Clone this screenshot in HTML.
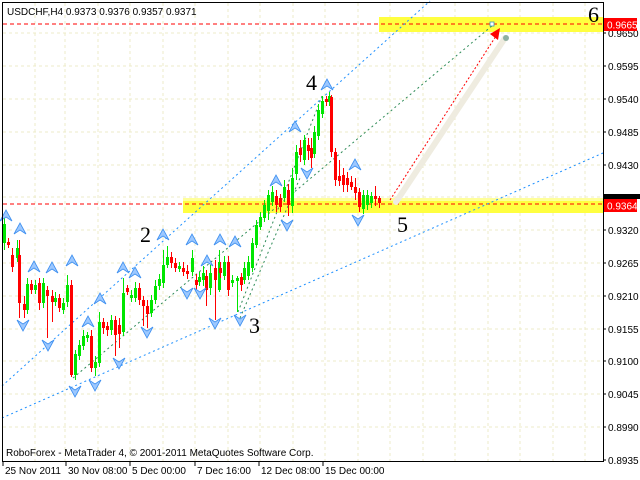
<!DOCTYPE html>
<html><head><meta charset="utf-8"><style>
html,body{margin:0;padding:0;background:#fff;width:640px;height:480px;overflow:hidden}
svg{display:block}
.s{font-family:"Liberation Sans",sans-serif}
.w{font-family:"Liberation Serif",serif}
</style></head><body>
<svg width="640" height="480" viewBox="0 0 640 480" xmlns="http://www.w3.org/2000/svg">
<defs>
<g id="up"><path d="M-6,5 L0,-6 L6,5 L0,1 Z" fill="#9cc8ff" stroke="#3d8ff0" stroke-width="0.8"/></g>
<g id="dn"><path d="M-6,-5 L0,6 L6,-5 L0,-1 Z" fill="#9cc8ff" stroke="#3d8ff0" stroke-width="0.8"/></g>
</defs>
<rect width="640" height="480" fill="#fff"/>
<g stroke="#ecebc8" stroke-width="1" stroke-dasharray="3,3">
<path d="M35,3V461M65,3V461M98,3V461M130,3V461M163,3V461M195,3V461M228,3V461M260,3V461M293,3V461M325,3V461M358,3V461M390,3V461M423,3V461M455,3V461M488,3V461M520,3V461M553,3V461M585,3V461"/>
<path d="M3,33H603M3,66H603M3,99H603M3,132H603M3,165H603M3,197H603M3,230H603M3,263H603M3,296H603M3,329H603M3,361H603M3,394H603M3,427H603"/>
</g>
<rect x="379" y="17" width="224" height="15" fill="#ffff40"/>
<rect x="183" y="198" width="420" height="15" fill="#ffff40"/>
<rect x="183" y="198" width="420" height="3" fill="#ffff9a"/>
<g stroke="#f00" stroke-width="1" stroke-dasharray="4,3">
<path d="M3,24H603M3,204H603"/>
</g>
<g stroke="#1e90ff" stroke-width="1" stroke-dasharray="2,3" fill="none">
<path d="M2,386L430,1"/>
<path d="M2,418L603,153"/>
</g>
<g stroke="#2e8b57" stroke-width="1" stroke-dasharray="2,3" fill="none">
<path d="M73,378L493,25"/>
<path d="M238,312L322,96"/>
<path d="M240,318L300,178"/>
</g>
<path d="M396,202L505,38" stroke="#efece0" stroke-width="6" stroke-linecap="round"/>
<circle cx="506" cy="38" r="3" fill="#8fb0a0"/>
<path d="M390,200L496,36" stroke="#f00" stroke-width="1" stroke-dasharray="2,2"/>
<path d="M500,28L490,34L498,40Z" fill="#f00"/>
<rect x="490" y="22" width="4" height="4" fill="#fff" stroke="#3a9ab0" stroke-width="0.8"/>
<g fill="#00e600">
<rect x="4" y="218" width="1" height="32"/><rect x="3" y="224" width="3" height="19"/>
<rect x="17" y="240" width="1" height="22"/><rect x="16" y="248" width="3" height="10"/>
<rect x="27" y="278" width="1" height="36"/><rect x="26" y="284" width="3" height="26"/>
<rect x="35" y="280" width="1" height="14"/><rect x="34" y="285" width="3" height="5"/>
<rect x="43" y="278" width="1" height="30"/><rect x="42" y="283" width="3" height="20"/>
<rect x="55" y="292" width="1" height="14"/><rect x="54" y="298" width="3" height="4"/>
<rect x="63" y="298" width="1" height="16"/><rect x="62" y="303" width="3" height="7"/>
<rect x="67" y="275" width="1" height="32"/><rect x="66" y="285" width="3" height="17"/>
<rect x="75" y="350" width="1" height="30"/><rect x="74" y="354" width="3" height="21"/>
<rect x="79" y="340" width="1" height="20"/><rect x="78" y="345" width="3" height="11"/>
<rect x="83" y="330" width="1" height="20"/><rect x="82" y="336" width="3" height="10"/>
<rect x="87" y="332" width="1" height="10"/><rect x="86" y="335" width="3" height="3"/>
<rect x="95" y="356" width="1" height="20"/><rect x="94" y="362" width="3" height="6"/>
<rect x="99" y="312" width="1" height="55"/><rect x="98" y="322" width="3" height="41"/>
<rect x="111" y="315" width="1" height="20"/><rect x="110" y="320" width="3" height="10"/>
<rect x="123" y="278" width="1" height="58"/><rect x="122" y="293" width="3" height="39"/>
<rect x="131" y="290" width="1" height="12"/><rect x="130" y="295" width="3" height="3"/>
<rect x="135" y="282" width="1" height="20"/><rect x="134" y="288" width="3" height="10"/>
<rect x="151" y="295" width="1" height="22"/><rect x="150" y="300" width="3" height="13"/>
<rect x="155" y="280" width="1" height="24"/><rect x="154" y="286" width="3" height="14"/>
<rect x="159" y="274" width="1" height="16"/><rect x="158" y="279" width="3" height="7"/>
<rect x="163" y="250" width="1" height="38"/><rect x="162" y="265" width="3" height="18"/>
<rect x="167" y="246" width="1" height="22"/><rect x="166" y="257" width="3" height="8"/>
<rect x="179" y="262" width="1" height="10"/><rect x="178" y="266" width="3" height="3"/>
<rect x="192" y="250" width="1" height="26"/><rect x="191" y="258" width="3" height="14"/>
<rect x="199" y="272" width="1" height="14"/><rect x="198" y="277" width="3" height="5"/>
<rect x="203" y="266" width="1" height="20"/><rect x="202" y="273" width="3" height="7"/>
<rect x="210" y="265" width="1" height="30"/><rect x="209" y="273" width="3" height="15"/>
<rect x="219" y="250" width="1" height="42"/><rect x="218" y="262" width="3" height="28"/>
<rect x="224" y="256" width="1" height="24"/><rect x="223" y="262" width="3" height="14"/>
<rect x="232" y="275" width="1" height="12"/><rect x="231" y="280" width="3" height="3"/>
<rect x="237" y="276" width="1" height="36"/><rect x="236" y="278" width="3" height="3"/>
<rect x="244" y="262" width="1" height="22"/><rect x="243" y="268" width="3" height="12"/>
<rect x="248" y="256" width="1" height="24"/><rect x="247" y="262" width="3" height="14"/>
<rect x="252" y="238" width="1" height="34"/><rect x="251" y="243" width="3" height="25"/>
<rect x="256" y="220" width="1" height="28"/><rect x="255" y="225" width="3" height="20"/>
<rect x="260" y="212" width="1" height="18"/><rect x="259" y="217" width="3" height="10"/>
<rect x="264" y="200" width="1" height="22"/><rect x="263" y="205" width="3" height="13"/>
<rect x="268" y="190" width="1" height="30"/><rect x="267" y="195" width="3" height="16"/>
<rect x="272" y="186" width="1" height="20"/><rect x="271" y="192" width="3" height="10"/>
<rect x="284" y="180" width="1" height="22"/><rect x="283" y="187" width="3" height="11"/>
<rect x="292" y="168" width="1" height="45"/><rect x="291" y="178" width="3" height="28"/>
<rect x="296" y="145" width="1" height="35"/><rect x="295" y="152" width="3" height="22"/>
<rect x="304" y="135" width="1" height="30"/><rect x="303" y="140" width="3" height="20"/>
<rect x="314" y="126" width="1" height="32"/><rect x="313" y="132" width="3" height="22"/>
<rect x="318" y="104" width="1" height="36"/><rect x="317" y="110" width="3" height="26"/>
<rect x="322" y="96" width="1" height="22"/><rect x="321" y="101" width="3" height="13"/>
<rect x="329" y="92" width="1" height="14"/><rect x="328" y="96" width="3" height="6"/>
<rect x="363" y="190" width="1" height="24"/><rect x="362" y="195" width="3" height="14"/>
<rect x="367" y="190" width="1" height="20"/><rect x="366" y="195" width="3" height="10"/>
<rect x="371" y="192" width="1" height="16"/><rect x="370" y="196" width="3" height="7"/>
</g>
<g fill="#f00">
<rect x="8" y="238" width="1" height="10"/><rect x="7" y="242" width="3" height="3"/>
<rect x="12" y="248" width="1" height="24"/><rect x="11" y="255" width="3" height="12"/>
<rect x="19" y="240" width="1" height="78"/><rect x="18" y="255" width="3" height="48"/>
<rect x="24" y="296" width="1" height="22"/><rect x="23" y="304" width="3" height="6"/>
<rect x="31" y="280" width="1" height="14"/><rect x="30" y="284" width="3" height="6"/>
<rect x="39" y="278" width="1" height="32"/><rect x="38" y="283" width="3" height="20"/>
<rect x="47" y="286" width="1" height="52"/><rect x="46" y="290" width="3" height="6"/>
<rect x="52" y="290" width="1" height="32"/><rect x="51" y="296" width="3" height="6"/>
<rect x="59" y="294" width="1" height="18"/><rect x="58" y="298" width="3" height="10"/>
<rect x="71" y="280" width="1" height="97"/><rect x="70" y="285" width="3" height="90"/>
<rect x="91" y="330" width="1" height="42"/><rect x="90" y="336" width="3" height="32"/>
<rect x="103" y="318" width="1" height="16"/><rect x="102" y="322" width="3" height="6"/>
<rect x="107" y="322" width="1" height="14"/><rect x="106" y="326" width="3" height="4"/>
<rect x="115" y="316" width="1" height="40"/><rect x="114" y="320" width="3" height="15"/>
<rect x="119" y="318" width="1" height="30"/><rect x="118" y="325" width="3" height="9"/>
<rect x="127" y="285" width="1" height="10"/><rect x="126" y="288" width="3" height="4"/>
<rect x="139" y="283" width="1" height="22"/><rect x="138" y="288" width="3" height="12"/>
<rect x="143" y="296" width="1" height="30"/><rect x="142" y="300" width="3" height="6"/>
<rect x="147" y="300" width="1" height="28"/><rect x="146" y="306" width="3" height="8"/>
<rect x="171" y="252" width="1" height="16"/><rect x="170" y="257" width="3" height="6"/>
<rect x="175" y="258" width="1" height="14"/><rect x="174" y="263" width="3" height="5"/>
<rect x="183" y="262" width="1" height="14"/><rect x="182" y="268" width="3" height="4"/>
<rect x="187" y="265" width="1" height="14"/><rect x="186" y="271" width="3" height="3"/>
<rect x="196" y="274" width="1" height="16"/><rect x="195" y="280" width="3" height="5"/>
<rect x="206" y="270" width="1" height="36"/><rect x="205" y="276" width="3" height="14"/>
<rect x="215" y="260" width="1" height="60"/><rect x="214" y="268" width="3" height="12"/>
<rect x="220" y="262" width="1" height="16"/><rect x="219" y="268" width="3" height="5"/>
<rect x="228" y="256" width="1" height="40"/><rect x="227" y="262" width="3" height="28"/>
<rect x="241" y="273" width="1" height="18"/><rect x="240" y="277" width="3" height="8"/>
<rect x="276" y="190" width="1" height="22"/><rect x="275" y="196" width="3" height="9"/>
<rect x="280" y="194" width="1" height="18"/><rect x="279" y="198" width="3" height="9"/>
<rect x="288" y="184" width="1" height="32"/><rect x="287" y="190" width="3" height="15"/>
<rect x="300" y="140" width="1" height="22"/><rect x="299" y="148" width="3" height="7"/>
<rect x="308" y="138" width="1" height="22"/><rect x="307" y="145" width="3" height="6"/>
<rect x="311" y="138" width="1" height="30"/><rect x="310" y="148" width="3" height="10"/>
<rect x="326" y="96" width="1" height="10"/><rect x="325" y="99" width="3" height="3"/>
<rect x="331" y="95" width="1" height="62"/><rect x="330" y="97" width="3" height="55"/>
<rect x="335" y="148" width="1" height="38"/><rect x="334" y="152" width="3" height="28"/>
<rect x="339" y="160" width="1" height="26"/><rect x="338" y="176" width="3" height="5"/>
<rect x="343" y="168" width="1" height="24"/><rect x="342" y="175" width="3" height="10"/>
<rect x="347" y="172" width="1" height="20"/><rect x="346" y="178" width="3" height="7"/>
<rect x="351" y="176" width="1" height="14"/><rect x="350" y="182" width="3" height="5"/>
<rect x="355" y="178" width="1" height="22"/><rect x="354" y="187" width="3" height="6"/>
<rect x="359" y="188" width="1" height="24"/><rect x="358" y="192" width="3" height="15"/>
<rect x="375" y="186" width="1" height="20"/><rect x="374" y="196" width="3" height="3"/>
<rect x="379" y="196" width="1" height="12"/><rect x="378" y="198" width="3" height="5"/>
</g>
<use href="#up" x="6" y="216"/><use href="#up" x="20" y="229"/><use href="#up" x="34" y="267"/><use href="#up" x="52" y="268"/><use href="#up" x="72" y="261"/><use href="#up" x="100" y="299"/><use href="#up" x="88" y="322"/><use href="#up" x="123" y="268"/><use href="#up" x="135" y="273"/><use href="#up" x="163" y="235"/><use href="#up" x="192" y="240"/><use href="#up" x="207" y="261"/><use href="#up" x="220" y="240"/><use href="#up" x="235" y="242"/><use href="#up" x="276" y="181"/><use href="#up" x="295" y="127"/><use href="#up" x="327" y="85"/><use href="#up" x="355" y="165"/>
<use href="#dn" x="23" y="325"/><use href="#dn" x="48" y="345"/><use href="#dn" x="75" y="391"/><use href="#dn" x="95" y="385"/><use href="#dn" x="119" y="363"/><use href="#dn" x="147" y="332"/><use href="#dn" x="187" y="293"/><use href="#dn" x="200" y="293"/><use href="#dn" x="215" y="323"/><use href="#dn" x="240" y="320"/><use href="#dn" x="287" y="225"/><use href="#dn" x="307" y="173"/><use href="#dn" x="358" y="220"/>
<g class="w" style="font-family:'Liberation Serif',serif;font-size:22px" fill="#000">
<text x="140" y="242">2</text><text x="249" y="333">3</text><text x="306" y="90">4</text><text x="397" y="232">5</text><text x="588" y="22">6</text>
</g>
<rect x="2.5" y="2.5" width="601" height="459" fill="none" stroke="#000" stroke-width="1"/>
<g class="s" style="font-size:10px" fill="#000">
<g stroke="#000"><path d="M603,33h3M603,66h3M603,99h3M603,132h3M603,165h3M603,230h3M603,263h3M603,296h3M603,329h3M603,361h3M603,394h3M603,427h3M603,460h3"/></g>
<text x="608" y="37">0.9650</text><text x="608" y="70">0.9595</text><text x="608" y="103">0.9540</text><text x="608" y="136">0.9485</text><text x="608" y="169">0.9430</text><text x="608" y="234">0.9320</text><text x="608" y="267">0.9265</text><text x="608" y="300">0.9210</text><text x="608" y="333">0.9155</text><text x="608" y="365">0.9100</text><text x="608" y="398">0.9045</text><text x="608" y="431">0.8990</text><text x="608" y="464">0.8935</text>
</g>
<rect x="604" y="194" width="36" height="5" fill="#000"/>
<rect x="604" y="18" width="33" height="13" fill="#f00"/>
<text class="s" x="607" y="28.5" style="font-size:10px" fill="#fff">0.9665</text>
<rect x="604" y="199" width="33" height="13" fill="#f00"/>
<text class="s" x="607" y="209.5" style="font-size:10px" fill="#fff">0.9364</text>
<g stroke="#000"><path d="M3,462v4M66,462v4M130,462v4M195,462v4M259,462v4M323,462v4"/></g>
<g class="s" style="font-size:10px" fill="#000">
<text x="5" y="474">25 Nov 2011</text><text x="68" y="474">30 Nov 08:00</text><text x="132" y="474">5 Dec 00:00</text><text x="197" y="474">7 Dec 16:00</text><text x="261" y="474">12 Dec 08:00</text><text x="325" y="474">15 Dec 00:00</text>
<text x="6" y="456">RoboForex - MetaTrader 4, © 2001-2011 MetaQuotes Software Corp.</text>
<text x="7" y="15">USDCHF,H4  0.9373 0.9376 0.9357 0.9371</text>
</g>
</svg>
</body></html>
